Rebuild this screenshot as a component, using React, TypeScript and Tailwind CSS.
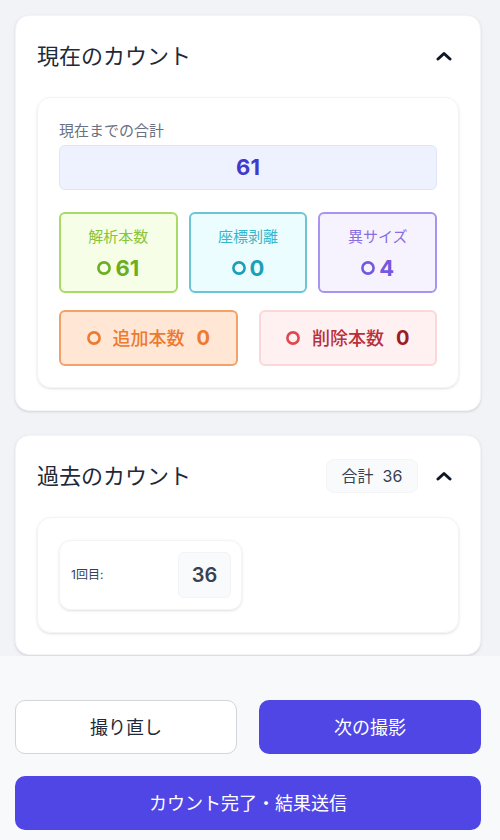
import React from 'react';

const Ring = ({ className }: { className: string }) => (
    <svg width="14" height="14" viewBox="0 0 14 14" className={className}>
        <circle cx="7" cy="7" r="5.6" fill="none" stroke="currentColor" strokeWidth="2.6" />
    </svg>
);

const Chevron = () => (
    <svg width="16" height="10" viewBox="0 0 16 10" className="mr-[7px] text-gray-900">
        <path d="M2 8 L8 2.5 L14 8" fill="none" stroke="currentColor" strokeWidth="3" strokeLinecap="round" strokeLinejoin="round" />
    </svg>
);

const stats = [
    { label: '解析本数', value: 61, box: 'bg-[#f7fee7] border-[#a8da68]', label_c: 'text-[#86c43a]', val: 'text-[#6aae22]' },
    { label: '座標剥離', value: 0, box: 'bg-[#ecfdff] border-[#6cc5d3]', label_c: 'text-[#37b7cc]', val: 'text-[#1a9fb8]' },
    { label: '異サイズ', value: 4, box: 'bg-[#f6f3ff] border-[#a993f0]', label_c: 'text-[#8a6ddf]', val: 'text-[#7458e0]' },
];

const App: React.FC = () => {
    return (
        <div className="min-h-[840px] bg-[#f1f3f7] flex flex-col" style={{ fontFamily: 'Inter, "Noto Sans CJK JP", sans-serif' }}>
            <div className="pl-[15px] pr-[19px] pt-[15px] flex flex-col gap-[24px]">
                {/* Current count */}
                <div className="bg-white rounded-[14px] border border-gray-100 shadow-sm px-[21px] pt-[23px] pb-[22px]">
                    <div className="h-[34px] flex items-center justify-between mb-[24px]">
                        <h2 className="text-[22px] text-gray-800 leading-none">現在のカウント</h2>
                        <Chevron />
                    </div>
                    <div className="rounded-[14px] border border-gray-100 shadow-sm px-[21px] pt-[22px] pb-[21px]">
                        <p className="text-[15px] leading-[22px] text-gray-500">現在までの合計</p>
                        <div className="mt-[3px] h-[45px] rounded-[6px] bg-[#eef2ff] border border-[#dfe4fb] flex items-center justify-center">
                            <span className="text-[22px] font-bold text-[#4338ca]">61</span>
                        </div>
                        <div className="mt-[22px] grid grid-cols-3 gap-[11px]">
                            {stats.map((s) => (
                                <div key={s.label} className={`h-[81px] rounded-[6px] border-2 ${s.box} flex flex-col items-center pt-[12px]`}>
                                    <span className={`text-[15px] leading-[22px] ${s.label_c}`}>{s.label}</span>
                                    <span className={`mt-[7px] flex items-center gap-[4px] text-[22px] leading-[26px] font-bold ${s.val}`}>
                                        <Ring className="" />
                                        {s.value}
                                    </span>
                                </div>
                            ))}
                        </div>
                        <div className="mt-[17px] grid grid-cols-2 gap-[21px]">
                            <div className="h-[56px] rounded-[6px] border-2 border-[#f3a16a] bg-[#ffe6d5] flex items-center justify-center gap-[12px] text-[#ec7a2f]">
                                <Ring className="" />
                                <span className="text-[18px] font-medium">追加本数</span>
                                <span className="text-[20px] font-bold">0</span>
                            </div>
                            <div className="h-[56px] rounded-[6px] border-2 border-[#fcd7d9] bg-[#fff1f1] flex items-center justify-center gap-[12px]">
                                <Ring className="text-[#e0474f]" />
                                <span className="text-[18px] font-medium text-[#b9303c]">削除本数</span>
                                <span className="text-[20px] font-bold text-[#9b1c22]">0</span>
                            </div>
                        </div>
                    </div>
                </div>

                {/* Past count */}
                <div className="bg-white rounded-[14px] border border-gray-100 shadow-sm px-[21px] pt-[23px] pb-[21px]">
                    <div className="h-[34px] flex items-center justify-between mb-[24px]">
                        <h2 className="text-[22px] text-gray-800 leading-none">過去のカウント</h2>
                        <div className="flex items-center gap-[18px]">
                            <span className="h-[34px] w-[92px] rounded-[8px] bg-gray-50 border border-gray-100 flex items-center justify-center text-[16px] text-gray-700">
                                合計&nbsp; 36
                            </span>
                            <Chevron />
                        </div>
                    </div>
                    <div className="rounded-[14px] border border-gray-100 shadow-sm px-[21px] py-[22px]">
                        <div className="w-[183px] h-[70px] rounded-[12px] border border-gray-100 shadow-sm flex items-center justify-between pl-[11px] pr-[10px]">
                            <span className="text-[12px] text-gray-700">1回目:</span>
                            <span className="w-[53px] h-[46px] rounded-[6px] bg-gray-50 border border-gray-100 flex items-center justify-center text-[20px] font-semibold text-gray-700">
                                36
                            </span>
                        </div>
                    </div>
                </div>
            </div>

            {/* Bottom actions */}
            <div className="mt-auto bg-[#f8f9fb] pl-[15px] pr-[19px] pt-[44px] pb-[10px] flex flex-col gap-[22px]">
                <div className="grid grid-cols-2 gap-[22px]">
                    <button className="h-[54px] rounded-[10px] bg-white border border-gray-300 text-[18px] text-gray-800">
                        撮り直し
                    </button>
                    <button className="h-[54px] rounded-[10px] bg-[#4f46e5] text-[18px] text-white">
                        次の撮影
                    </button>
                </div>
                <button className="h-[54px] rounded-[10px] bg-[#4f46e5] text-[18px] text-white">
                    カウント完了・結果送信
                </button>
            </div>
        </div>
    );
};

export default App;
